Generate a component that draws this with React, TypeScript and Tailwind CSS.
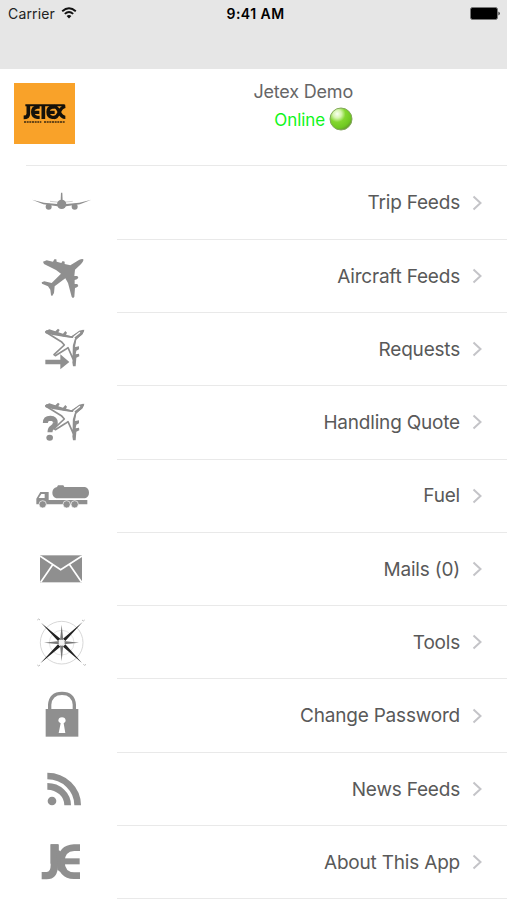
import React from 'react';

interface MenuItem {
  id: string;
  label: string;
  icon: React.ReactNode;
}

const GREY = '#8f8f8f';

const PlaneOutline = () => (
  <>
    <path
      d="M160 31 L148 34 L127 50 L104 47 L50 32 L48 36 L94 64 L103 74 L72 103 L76 106 L107 87 L114 82 L130 118 L131 76 L137 56 L152 43 Z"
      fill="#fff"
      stroke={GREY}
      strokeWidth="5"
      strokeLinejoin="round"
    />
    <path
      d="M45 33 L58 27 L76 33 L84 25 L89 29 L85 36 L99 40 L106 32 L111 37 L108 43 L124 48 L140 38 L163 28 L158 42 L139 56 L135 80 L140 79 L147 78 L147 87 L139 91 L137 102 L147 100 L148 108 L139 112 L137 138 L129 138 L127 126 L130 108 L130 76 L137 53 L127 53 L104 50 L68 44 L47 39 Z"
      fill={GREY}
    />
    <path d="M150 36 L133 49 L130 55" stroke="#fff" strokeWidth="4" fill="none" />
  </>
);

const MENU_ITEMS: MenuItem[] = [
  {
    id: 'trip-feeds',
    label: 'Trip Feeds',
    icon: (
      <g transform="translate(60 42)" fill={GREY}>
        <path d="M36 59 L72 68 L112 72 L138 72 L178 68 L214 59 L180 73 L138 79 L112 79 L70 73 Z" />
        <path d="M123 38 h4 l1 24 h-6 Z" />
        <path d="M90 64 L120 67 M158 64 L128 67" stroke="#b5b5b5" strokeWidth="2" />
        <circle cx="125" cy="73" r="14" />
        <circle cx="86" cy="80" r="9" />
        <circle cx="164" cy="80" r="9" />
      </g>
    ),
  },
  {
    id: 'aircraft-feeds',
    label: 'Aircraft Feeds',
    icon: (
      <g transform="translate(90 31)" fill={GREY}>
        <path d="M160 27 Q162 33 151 43 L135 58 L133 77 L142 77 L145 82 L141 87 L134 89 L134 101 L142 101 L145 107 L141 111 L135 113 L133 139 Q129 146 125 139 L114 98 L106 84 L74 108 L72 128 L66 138 L63 134 L61 118 L54 108 L36 100 L35 96 L43 93 L65 98 L93 70 L78 59 L42 41 L39 34 L50 30 L69 34 L73 27 L79 27 L80 34 L94 38 L98 32 L104 34 L104 41 L121 45 L137 35 Q154 23 160 27 Z" />
      </g>
    ),
  },
  {
    id: 'requests',
    label: 'Requests',
    icon: (
      <g transform="translate(90 22)">
        <PlaneOutline />
        <path d="M46 118 H91 V102 L118 125 L91 147 V132 H46 Z" fill={GREY} />
      </g>
    ),
  },
  {
    id: 'handling-quote',
    label: 'Handling Quote',
    icon: (
      <g transform="translate(90 25)">
        <PlaneOutline />
        <path
          d="M46 86 Q46 72 61 72 Q77 73 76 86 Q75 94 67 99 Q60 103 60 114"
          fill="none"
          stroke={GREY}
          strokeWidth="15"
        />
        <ellipse cx="59" cy="130" rx="10" ry="9" fill={GREY} />
      </g>
    ),
  },
  {
    id: 'fuel',
    label: 'Fuel',
    icon: (
      <g transform="translate(75 46)" fill={GREY}>
        <path d="M96 35 L99 30 H115 L118 35 H180 Q192 39 192 52 Q192 65 180 69 H94 Q82 65 82 52 Q82 39 96 35 Z" />
        <path
          fillRule="evenodd"
          d="M34 88 V70 L46 50 H71 V74 H187 V87 H34 Z M41 68 L49 56 H59 V68 Z"
        />
        <g stroke="#fff" strokeWidth="2">
          <circle cx="53" cy="87" r="11" />
          <circle cx="125" cy="87" r="11" />
          <circle cx="149" cy="87" r="11" />
        </g>
      </g>
    ),
  },
  {
    id: 'mails',
    label: 'Mails (0)',
    icon: (
      <g transform="translate(90 37)">
        <rect x="30" y="30" width="126" height="81" fill={GREY} />
        <path
          d="M30 32 L92 73 L156 32 M68 58 L32 111 M119 58 L155 111"
          fill="none"
          stroke="#fff"
          strokeWidth="5"
        />
      </g>
    ),
  },
  {
    id: 'tools',
    label: 'Tools',
    icon: (
      <g transform="translate(90 12)">
        <g fill="none" stroke="#cfcfcf" strokeWidth="2.5">
          <circle cx="95" cy="98" r="64" />
          <circle cx="95" cy="98" r="37" stroke="#dedede" />
        </g>
        <g fill="#777">
          <path d="M95 44 L100 92 L95 98 L90 92 Z M95 154 L100 104 L95 98 L90 104 Z" />
          <path d="M42 98 L89 93 L95 98 L89 103 Z M147 98 L101 93 L95 98 L101 103 Z" />
        </g>
        <g fill="#222">
          <path d="M33 38 L91 86 L84 93 Z M158 36 L106 93 L99 86 Z M31 160 L84 103 L91 110 Z M156 159 L99 110 L106 103 Z" />
        </g>
        <circle cx="95" cy="98" r="9" fill="#f2f2f2" />
        <path
          d="M22 30 q4 -6 8 0 M156 30 q4 6 8 0 M22 165 q4 6 8 0 M160 163 q4 6 8 0"
          fill="none"
          stroke="#bbb"
          strokeWidth="3"
        />
      </g>
    ),
  },
  {
    id: 'change-password',
    label: 'Change Password',
    icon: (
      <g transform="translate(90 19)">
        <path d="M59 74 V58 Q62 24 96 24 Q130 24 133 58 V74" fill="none" stroke={GREY} strokeWidth="10" />
        <rect x="47" y="71" width="98" height="83" fill={GREY} />
        <path d="M92 114 Q85 110 85 106 Q86 96 96 96 Q106 96 107 106 Q107 110 101 114 L106 143 H86 Z" fill="#fff" />
      </g>
    ),
  },
  {
    id: 'news-feeds',
    label: 'News Feeds',
    icon: (
      <g transform="translate(90 22)">
        <path
          d="M52 47 A91 88 0 0 1 143 135 M52 78 A61 57 0 0 1 113 135"
          fill="none"
          stroke={GREY}
          strokeWidth="20"
        />
        <circle cx="66" cy="122" r="13" fill={GREY} />
      </g>
    ),
  },
  {
    id: 'about',
    label: 'About This App',
    icon: (
      <g transform="translate(90 -197)" fill="none" stroke={GREY} strokeWidth="20">
        <path d="M73 252 V314 Q73 346 50 346 H35" strokeWidth="22" />
        <path d="M150 262 H132 Q94 264 94 304 Q94 344 132 346 H150" />
        <path d="M90 303 H149" strokeWidth="18" />
        <path d="M74 252 V310" strokeWidth="25" />
        <path d="M80 268 L92 272 V336 L82 328 Z" fill={GREY} stroke="none" />
      </g>
    ),
  },
];

const StatusBar = () => (
  <div className="flex h-[69px] items-start bg-[#e6e6e6] px-2 pt-1 text-[#222]">
    <div className="flex flex-1 items-center gap-[6px]">
      <span className="text-[14px] leading-5 tracking-[0.15px]">Carrier</span>
      <svg width="16" height="12" viewBox="0 0 16 12" className="-mt-[2px]" fill="none" stroke="#111">
        <path d="M1.2 4.2 Q8 -1.6 14.8 4.2" strokeWidth="1.9" />
        <path d="M3.8 6.9 Q8 3.2 12.2 6.9" strokeWidth="1.9" />
        <path d="M8 11.4 L5.6 9 Q8 7 10.4 9 Z" fill="#111" stroke="none" />
      </svg>
    </div>
    <span className="mr-[-2px] text-[14px] font-semibold leading-5 tracking-[0.45px] text-black">9:41 AM</span>
    <div className="-mr-[2px] flex h-5 flex-1 items-center justify-end">
      <svg width="31" height="13" viewBox="0 0 31 13" className="-mt-px">
        <rect x="0.5" y="0.5" width="27" height="12" rx="2" fill="#000" stroke="#777" />
        <path d="M28.5 4.5 Q31 6.5 28.5 8.5 Z" fill="#111" />
      </svg>
    </div>
  </div>
);

const JetexLogo = () => (
  <div className="flex h-[61px] w-[61px] items-center justify-center bg-[#f9a229]">
    <svg width="61" height="61" viewBox="0 0 183 183">
      <g fill="none" stroke="#15110a" strokeWidth="10">
        <path d="M34 67 H152" strokeWidth="6" />
        <path d="M43 67 V92 Q43 103 29 103" strokeWidth="11" />
        <path d="M77 72 H70 Q56 74 56 87 Q56 101 70 103 H77 M56 88 H76" />
        <path d="M88 68 V108" strokeWidth="11" />
        <path d="M122 72 H115 Q102 74 102 87 Q102 101 115 103 H124 M102 88 H122" />
        <path d="M120 70 Q129 71 136 87 Q143 103 154 103 M154 70 Q143 71 136 87 Q129 103 120 104" />
      </g>
      <path d="M30 117 H82 M90 117 H154" stroke="#3c2a10" strokeWidth="5" strokeDasharray="6 2" />
    </svg>
  </div>
);

const OnlineBadge = () => (
  <svg width="24" height="24" viewBox="0 0 24 24" className="-mt-[2px]">
    <defs>
      <radialGradient id="orb" cx="0.33" cy="0.27" r="0.75">
        <stop offset="0" stopColor="#fafff2" />
        <stop offset="0.25" stopColor="#d6f5ae" />
        <stop offset="0.5" stopColor="#83d62f" />
        <stop offset="0.85" stopColor="#6fc821" />
        <stop offset="1" stopColor="#66a02c" />
      </radialGradient>
    </defs>
    <circle cx="12" cy="12" r="11" fill="url(#orb)" stroke="#83a85c" strokeWidth="1" />
  </svg>
);

const ProfileHeader = () => (
  <div className="flex h-[96.4px] justify-between pl-[14px] pr-[154px] pt-[14px]">
    <JetexLogo />
    <div className="flex flex-col items-end">
      <span className="-mt-[3px] text-[18px] leading-6 tracking-[-0.2px] text-[#666]">Jetex Demo</span>
      <div className="mt-[3px] flex items-center gap-1">
        <span className="pt-px text-[17px] leading-6 tracking-[-0.1px] text-[#0ff51a]">Online</span>
        <OnlineBadge />
      </div>
    </div>
  </div>
);

const MenuRow: React.FC<{ item: MenuItem }> = ({ item }) => (
  <button className="flex h-[73.3px] w-full text-left">
    <svg width="117" height="73" viewBox="0 0 351 219" className="shrink-0">
      {item.icon}
    </svg>
    <span className="flex h-full flex-1 items-center justify-end gap-[12px] border-b border-[#e9e9e9] pr-6">
      <span className="pt-[2px] text-[19px] tracking-[-0.2px] text-[#595959]">{item.label}</span>
      <svg width="11" height="16" viewBox="0 0 11 16" fill="none" stroke="#c4c4c8" strokeWidth="2">
        <path d="M1.5 1.5 L8.5 8 L1.5 14.5" />
      </svg>
    </span>
  </button>
);

export default function App() {
  return (
    <div className="h-[900px] w-full overflow-hidden bg-white font-['Inter',sans-serif]">
      <StatusBar />
      <ProfileHeader />
      <div className="ml-[26px] h-px bg-[#e9e9e9]" />
      <nav>
        {MENU_ITEMS.map((item) => (
          <MenuRow key={item.id} item={item} />
        ))}
      </nav>
    </div>
  );
}
